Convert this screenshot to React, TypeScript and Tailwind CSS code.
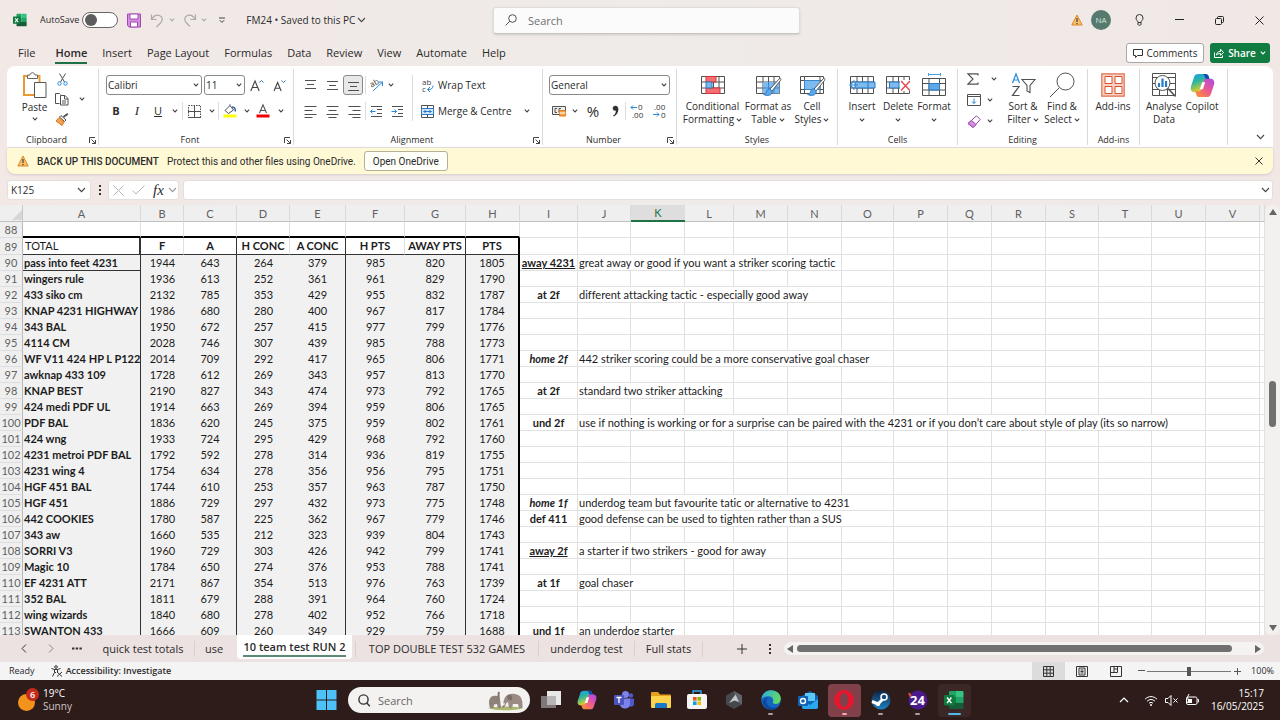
import { useState } from "react";
import type { ReactNode } from "react";

interface Row {
  name: string;
  v: number[];
  tag?: string;
  tagStyle?: string;
  note?: string;
  span?: number;
}

const rows: Row[] = [
  { name: "pass into feet 4231", v: [1944, 643, 264, 379, 985, 820, 1805], tag: "away 4231", tagStyle: "underline", note: "great away or good if you want a striker scoring tactic", span: 5 },
  { name: "wingers rule", v: [1936, 613, 252, 361, 961, 829, 1790] },
  { name: "433 siko cm", v: [2132, 785, 353, 429, 955, 832, 1787], tag: "at 2f", note: "different attacking tactic - especially good away", span: 5 },
  { name: "KNAP 4231 HIGHWAY", v: [1986, 680, 280, 400, 967, 817, 1784] },
  { name: "343 BAL", v: [1950, 672, 257, 415, 977, 799, 1776] },
  { name: "4114 CM", v: [2028, 746, 307, 439, 985, 788, 1773] },
  { name: "WF V11 424 HP L P122", v: [2014, 709, 292, 417, 965, 806, 1771], tag: "home 2f", tagStyle: "italic", note: "442 striker scoring could be a more conservative goal chaser", span: 6 },
  { name: "awknap 433 109", v: [1728, 612, 269, 343, 957, 813, 1770] },
  { name: "KNAP BEST", v: [2190, 827, 343, 474, 973, 792, 1765], tag: "at 2f", note: "standard two striker attacking", span: 3 },
  { name: "424 medi PDF UL", v: [1914, 663, 269, 394, 959, 806, 1765] },
  { name: "PDF BAL", v: [1836, 620, 245, 375, 959, 802, 1761], tag: "und 2f", note: "use if nothing is working or for a surprise can be paired with the 4231 or if you don’t care about style of play (its so narrow)", span: 12 },
  { name: "424 wng", v: [1933, 724, 295, 429, 968, 792, 1760] },
  { name: "4231 metroi PDF BAL", v: [1792, 592, 278, 314, 936, 819, 1755] },
  { name: "4231 wing 4", v: [1754, 634, 278, 356, 956, 795, 1751] },
  { name: "HGF 451 BAL", v: [1744, 610, 253, 357, 963, 787, 1750] },
  { name: "HGF 451", v: [1886, 729, 297, 432, 973, 775, 1748], tag: "home 1f", tagStyle: "italic", note: "underdog team but favourite tatic or alternative to 4231", span: 6 },
  { name: "442 COOKIES", v: [1780, 587, 225, 362, 967, 779, 1746], tag: "def 411", note: "good defense can be used to tighten rather than a SUS", span: 6 },
  { name: "343 aw", v: [1660, 535, 212, 323, 939, 804, 1743] },
  { name: "SORRI V3", v: [1960, 729, 303, 426, 942, 799, 1741], tag: "away 2f", tagStyle: "underline", note: "a starter if two strikers - good for away", span: 4 },
  { name: "Magic 10", v: [1784, 650, 274, 376, 953, 788, 1741] },
  { name: "EF 4231 ATT", v: [2171, 867, 354, 513, 976, 763, 1739], tag: "at 1f", note: "goal chaser", span: 2 },
  { name: "352 BAL", v: [1811, 679, 288, 391, 964, 760, 1724] },
  { name: "wing wizards", v: [1840, 680, 278, 402, 952, 766, 1718] },
  { name: "SWANTON 433", v: [1666, 609, 260, 349, 929, 759, 1688], tag: "und 1f", note: "an underdog starter", span: 2 },
];

const columns: [string, string][] = [
  ["A", "w-[118px]"], ["B", "w-[43px]"], ["C", "w-[53px]"], ["D", "w-[53px]"],
  ["E", "w-[56px]"], ["F", "w-[59px]"], ["G", "w-[61px]"], ["H", "w-[54px]"],
  ["I", "w-[58px]"], ["J", "w-[53px]"], ["K", "w-[54px]"], ["L", "w-[49px]"],
  ["M", "w-[54px]"], ["N", "w-[54px]"], ["O", "w-[52px]"], ["P", "w-[54px]"],
  ["Q", "w-[44px]"], ["R", "w-[54px]"], ["S", "w-[53px]"], ["T", "w-[53px]"],
  ["U", "w-[54px]"], ["V", "w-[54px]"], ["", ""],
];

const totals = ["F", "A", "H CONC", "A CONC", "H PTS", "AWAY PTS", "PTS"];
const grid = "border-r border-b border-[#e1e1e1]";

// right edge of each number column inside the bordered block
const edge = [
  "",
  "border-r border-r-[#333]",
  "",
  "border-r border-r-[#333]",
  "",
  "border-r border-r-[#333]",
  "border-r-2 border-r-black",
];

function Svg({ w, h, box, className, children }: { w: number; h: number; box?: string; className?: string; children: ReactNode }) {
  return (
    <svg
      width={w}
      height={h}
      viewBox={box ?? `0 0 ${w} ${h}`}
      fill="none"
      stroke="#505050"
      className={`shrink-0 overflow-visible ${className ?? ""}`}
      aria-hidden="true"
    >
      {children}
    </svg>
  );
}

function Chevron({ big, color = "#444" }: { big?: boolean; color?: string }) {
  return big ? (
    <Svg w={9} h={6}><path d="M1 1l3.500 3.600L8 1" stroke={color} strokeWidth="1.100" /></Svg>
  ) : (
    <Svg w={6} h={4}><path d="M.8.7L3 2.900 5.200.7" stroke={color} strokeWidth="1.100" /></Svg>
  );
}

function Btn({ label, w, className, children }: { label: string; w: string; className?: string; children: ReactNode }) {
  return (
    <button type="button" aria-label={label} className={`flex h-5 shrink-0 items-center justify-center ${w} ${className ?? ""}`}>
      {children}
    </button>
  );
}

function Sep() {
  return <span className="h-[18px] w-px shrink-0 bg-[#dcdcdc]" />;
}

function Group({ label, w, launcher, children }: { label: string; w: string; launcher?: boolean; children: ReactNode }) {
  return (
    <section className={`flex h-[76px] shrink-0 flex-col border-r border-[#dadada] ${w}`}>
      <div className="h-[66px]">{children}</div>
      <div className="flex h-2.5 items-center">
        <span className="flex-1 text-center text-[9px] leading-[10px]">{label}</span>
        {launcher && (
          <button type="button" aria-label={`${label} settings`} className="flex w-3 justify-center">
            <Svg w={7} h={7}><path d="M.5 6V.5H6M2.500 2.500l4 4M6.500 3v3.500H3" stroke="#444" /></Svg>
          </button>
        )}
      </div>
    </section>
  );
}

function BigButton({ w, icon, lines, chevron }: { w: string; icon: ReactNode; lines: string[]; chevron?: boolean }) {
  const last = lines.length - 1;
  return (
    <button type="button" className={`flex shrink-0 flex-col items-center pt-[3px] text-[10px] leading-[13px] whitespace-nowrap ${w}`}>
      <span className="mb-0.5 flex h-[26px] items-center">{icon}</span>
      {lines.map((l, i) => (
        <span key={i} className="flex h-[13px] items-center gap-0.5">
          {l}
          {chevron && i === last && <Chevron />}
        </span>
      ))}
    </button>
  );
}

function Combo({ label, value, w }: { label: string; value: string; w: string }) {
  return (
    <div className={`relative shrink-0 ${w}`}>
      <select aria-label={label} className="h-5 w-full appearance-none rounded-[3px] border border-[#8a8a8a] bg-white pl-px text-[10px] leading-[18px]">
        <option>{value}</option>
      </select>
      <span className="pointer-events-none absolute top-2 right-[3px]"><Chevron /></span>
    </div>
  );
}

function Lines({ d }: { d: string }) {
  return <Svg w={13} h={13}><path d={d} stroke="#505050" /></Svg>;
}

function Warning() {
  return (
    <Svg w={12} h={12}>
      <path d="M6 1l5.200 10H.8z" fill="#fbc06a" stroke="#d98a2b" strokeLinejoin="round" />
      <path d="M6 4v4M6 9v1.200" stroke="#333" strokeWidth="1.100" />
    </Svg>
  );
}

function ExcelLogo({ size }: { size: number }) {
  return (
    <Svg w={size} h={size} box="0 0 20 20">
      <g stroke="none">
        <path d="M5 2.200A1.200 1.200 0 016.200 1H12v6H5z" fill="#21a366" />
        <path d="M12 1h6.300a1.200 1.200 0 011.200 1.200V7H12z" fill="#33c481" />
        <path d="M5 7h7v6H5z" fill="#107c41" />
        <path d="M12 7h7.500v6H12z" fill="#21a366" />
        <path d="M5 13h14.500v4.800a1.200 1.200 0 01-1.200 1.200H6.200A1.200 1.200 0 015 17.800z" fill="#185c37" />
        <rect x="0" y="5" width="10.500" height="10.500" rx="1" fill="#0d7a40" />
      </g>
      <path d="M3 7.500l4.400 5.600M7.400 7.500L3 13.100" stroke="#fff" strokeWidth="1.500" />
    </Svg>
  );
}

function CopilotLogo({ size }: { size: number }) {
  return (
    <Svg w={size} h={size} box="0 0 26 26">
      <defs>
        <linearGradient id="cpA" x1="0" y1="0" x2="0.400" y2="1">
          <stop offset="0" stopColor="#1d9bf0" /><stop offset=".45" stopColor="#2bb5a0" /><stop offset="1" stopColor="#f4d01c" />
        </linearGradient>
        <linearGradient id="cpB" x1="1" y1="0" x2="0.200" y2="1">
          <stop offset="0" stopColor="#a44be8" /><stop offset=".5" stopColor="#e8559a" /><stop offset="1" stopColor="#fb8a3c" />
        </linearGradient>
      </defs>
      <g stroke="none">
        <path d="M9 1h7c2 0 3 1 3.600 3l.9 3h-3c-2 0-3 1-3.600 3l-2 7c-.6 2-1.500 3-3.500 3H5c-3 0-5-2-4-6L4 5c.8-3 2-4 5-4z" fill="url(#cpA)" />
        <path d="M13 1h3c2 0 3 1 3.600 3l.9 3h-4c-1.200-4-1.500-5-3.500-6z" fill="#1848b8" />
        <path d="M17 25h-7c-2 0-3-1-3.600-3l-.9-3h3c2 0 3-1 3.600-3l2-7c.6-2 1.500-3 3.500-3H21c3 0 5 2 4 6l-3 9c-.8 3-2 4-5 4z" fill="url(#cpB)" />
        <path d="M12.600 9.500h3.200l-2.400 7.500h-3.200z" fill="#fff" />
      </g>
    </Svg>
  );
}

function TitleBar({ saved, setSaved }: { saved: boolean; setSaved: (v: boolean) => void }) {
  return (
    <header className="flex h-10 shrink-0 items-center">
      <div className="flex flex-1 items-center pl-[13px]">
        <ExcelLogo size={14} />
        <label htmlFor="autosave" className="ml-[13px] text-[9px]">AutoSave</label>
        <input
          id="autosave"
          type="checkbox"
          checked={saved}
          onChange={(e) => setSaved(e.target.checked)}
          className="ml-[3px] h-4 w-9 appearance-none rounded-full border border-[#666] bg-white before:mt-px before:ml-0.5 before:block before:size-3 before:rounded-full before:bg-[#5d5d5d] before:content-[''] checked:before:ml-5"
        />
        <button type="button" aria-label="Save" className="ml-2">
          <Svg w={16} h={15}>
            <path d="M1.500 1h13v13H3L1.500 12.500z" fill="#d68ee0" stroke="#a348b3" />
            <path d="M4 1h8v5H4zM4.500 9h7v5h-7z" fill="#fff" stroke="#a348b3" />
          </Svg>
        </button>
        <button type="button" aria-label="Undo" className="ml-2 flex items-center gap-1">
          <Svg w={15} h={15}><path d="M1.500 1.500v5h5M1.800 6.200C4 2.500 7 1.500 9.500 2.500c3.500 1.500 3.500 5 1 7.500L6.500 14" stroke="#aaa" strokeWidth="1.200" /></Svg>
          <Chevron color="#aaa" />
        </button>
        <button type="button" aria-label="Redo" className="ml-2 flex items-center gap-1">
          <Svg w={14} h={15}><path d="M12.500 1.500v5h-5M12.200 6.200C10 2.500 7 1.500 4.500 2.500 1 4 1 7.500 3.500 10L7 13.500" stroke="#aaa" strokeWidth="1.200" /></Svg>
          <Chevron color="#aaa" />
        </button>
        <button type="button" aria-label="Customise toolbar" className="ml-3">
          <Svg w={6} h={7}><path d="M0 1h6M.8 3.200L3 5.400l2.200-2.200" stroke="#444" /></Svg>
        </button>
        <button type="button" className="ml-[21px] flex items-center gap-0.5 text-[10px] whitespace-nowrap">
          FM24 • Saved to this PC <Chevron big />
        </button>
      </div>
      <div className="relative w-[307px]">
        <input type="text" aria-label="Search" placeholder="Search" className="h-[27px] w-full rounded-[3px] border border-[#e0dcda] border-b-[#c8c4c2] bg-[#fbfbfb] pl-[34px] text-[11px] shadow-sm placeholder:text-[#707070]" />
        <span className="absolute top-[7px] left-3">
          <Svg w={12} h={12}><circle cx="7.500" cy="4.500" r="3.800" /><path d="M4.700 7.300L.6 11.400" /></Svg>
        </span>
      </div>
      <div className="flex flex-1 items-center justify-end">
        <span className="mr-2"><Warning /></span>
        <button type="button" className="mr-6 size-5 rounded-full bg-[#567a6d] text-center text-[8px] leading-5 text-[#d8e4df]">NA</button>
        <button type="button" aria-label="Tips" className="mr-[31px]">
          <Svg w={9} h={12}><path d="M3 8.500C3 6.500 1 6.500 1 4a3.500 3.500 0 017 0c0 2.500-2 2.500-2 4.500zM3 8.500v2c0 1 3 1 3 0v-2" stroke="#333" /></Svg>
        </button>
        <button type="button" aria-label="Minimise" className="mr-[31px]"><Svg w={9} h={2}><path d="M0 .5h9" stroke="#222" /></Svg></button>
        <button type="button" aria-label="Restore" className="mr-[31px]">
          <Svg w={9} h={9}><rect x=".5" y="2.500" width="6" height="6" rx="1" stroke="#222" /><path d="M2.500 2V1.500a1 1 0 011-1h4a1 1 0 011 1v4a1 1 0 01-1 1H7" stroke="#222" /></Svg>
        </button>
        <button type="button" aria-label="Close" className="mr-4"><Svg w={9} h={9}><path d="M.5.5l8 8M8.500.5l-8 8" stroke="#222" /></Svg></button>
      </div>
    </header>
  );
}

const menu = ["File", "Home", "Insert", "Page Layout", "Formulas", "Data", "Review", "View", "Automate", "Help"];

function MenuTabs() {
  return (
    <nav className="flex h-[26px] shrink-0 items-center pr-2.5 pl-[18px] text-[11px]">
      {menu.map((m) => (
        <a
          key={m}
          href="#"
          className={
            m === "Home"
              ? "mr-[15px] ml-5 border-b-2 border-[#1e7145] pt-0.5 font-semibold leading-[18px]"
              : "border-b-2 border-transparent pt-0.5 leading-[18px] not-first:mr-[15px] whitespace-nowrap"
          }
        >
          {m}
        </a>
      ))}
      <div className="ml-auto flex gap-1.5 text-[10px]">
        <button type="button" className="flex h-5 w-[78px] items-center justify-center gap-1 rounded-[3px] border border-[#a8a8a8] bg-white">
          <Svg w={10} h={9}><path d="M.5.5h9v6H4.500l-2 2v-2h-2z" stroke="#333" /></Svg>
          Comments
        </button>
        <button type="button" className="flex h-5 w-[60px] items-center justify-center gap-1 rounded-[3px] bg-[#107c41] font-semibold text-white">
          <Svg w={10} h={10}><path d="M.5 4.500v5h8v-2M2.500 7c.3-2.500 1.500-3.500 4-3.500V1.200L9.500 4.500 6.500 7.300V5.500C4.500 5.500 3.500 6 2.500 7z" stroke="#fff" /></Svg>
          Share
          <Chevron color="#fff" />
        </button>
      </div>
    </nav>
  );
}

function TableIcon({ children }: { children?: ReactNode }) {
  return (
    <Svg w={26} h={26}>
      <path d="M1.500 4.500h23v17h-23zM1.500 10h23M1.500 16h23M8 4.500v17M13.500 4.500v17M19 4.500v17" fill="#fff" />
      {children}
    </Svg>
  );
}

function Brush() {
  return (
    <>
      <path d="M24.500 6.500L15 17l2 2 8.500-10.500c1-1.500 0-2.800-1-2z" fill="#fff" stroke="#555" />
      <path d="M15 16.800c-2 0-3 1.200-3.500 3.200-.3 1.200-1.500 2-3 2.200 3 2 7.500 1.500 8.500-1.200.4-1.400 0-2.400-.6-3z" fill="#5ea8e8" stroke="#2b79c2" />
    </>
  );
}

function Ribbon() {
  return (
    <div className="mx-[7px] flex h-[81px] shrink-0 items-start overflow-hidden rounded-t-lg bg-white pt-[3px] text-[10px]">
      <Group label="Clipboard" w="w-[92px]" launcher>
        <div className="flex">
          <button type="button" className="ml-3.5 flex w-[27px] flex-col items-center pt-[3px] leading-[13px]">
            <Svg w={25} h={26}>
              <path d="M2 4h15.500v19H2z" stroke="#eb9a33" strokeWidth="2" fill="#fff" />
              <path d="M5.500 6.500V3H8c.5-3 4.500-3 5 0h2.500v3.500z" fill="#fff" stroke="#666" />
              <path d="M12.500 10.500h11.500v15H12.500z" fill="#fff" stroke="#555" />
            </Svg>
            <span className="mt-[3px] h-4">Paste</span>
            <Chevron />
          </button>
          <div className="ml-1 w-[34px]">
            <Btn label="Cut" w="w-5">
              <Svg w={11} h={13}><path d="M2.500.5l5 8.500M8.500.5L3.500 9" /><circle cx="2.500" cy="10.500" r="1.700" stroke="#2b88d8" /><circle cx="8.500" cy="10.500" r="1.700" stroke="#2b88d8" /></Svg>
            </Btn>
            <div className="flex items-center">
              <Btn label="Copy" w="w-5">
                <Svg w={14} h={14}><path d="M4.500 11.500h-4V1.500h4l1 1" /><path d="M5.500 3.500H10l3 3v6.500H5.500zM9.500 3.500V7H13M7 9h4M7 11h4" fill="#fff" /></Svg>
              </Btn>
              <button type="button" aria-label="Copy options" className="ml-[7px]"><Chevron /></button>
            </div>
            <Btn label="Format painter" w="w-5">
              <Svg w={14} h={13}><path d="M12.800.7L8.500 4" stroke="#555" strokeWidth="2" /><path d="M6 2.500l5 4.500-1.500 1.500-5-4.500z" fill="#fff" /><path d="M4 4.500l5 4.500-2 3.500L1 8z" fill="#f5a352" stroke="#d97a1e" /></Svg>
            </Btn>
          </div>
        </div>
      </Group>

      <Group label="Font" w="w-[195px]" launcher>
        <div className="flex flex-col gap-1.5 pt-1.5 pl-[7px]">
          <div className="flex">
            <Combo label="Font" value="Calibri" w="w-24" />
            <span className="w-0.5" />
            <Combo label="Font size" value="11" w="w-[41px]" />
            <Btn label="Increase font size" w="w-[24px]">
              <Svg w={14} h={13}><path d="M.8 12L5 2l4.200 10M2.200 8.500h5.600" stroke="#444" strokeWidth="1.100" /><path d="M9.500 3.500l2-2 2 2" stroke="#2b79c2" /></Svg>
            </Btn>
            <Btn label="Decrease font size" w="w-[20px]">
              <Svg w={13} h={13}><path d="M1 12L4.600 3.500 8.200 12M2.200 9.200h4.800" stroke="#444" strokeWidth="1.100" /><path d="M8.500 1.500l2 2 2-2" stroke="#2b79c2" /></Svg>
            </Btn>
          </div>
          <div className="flex items-center">
            <Btn label="Bold" w="w-5" className="text-[11px] font-bold">B</Btn>
            <Btn label="Italic" w="w-[22px]" className="font-['Liberation_Serif',serif] text-[13px] italic">I</Btn>
            <Btn label="Underline" w="w-5" className="text-[11px] underline">U</Btn>
            <Btn label="Underline options" w="w-[14px]"><Chevron /></Btn>
            <Sep />
            <Btn label="Borders" w="w-[22px]"><Svg w={13} h={13}><path d="M.5.5h12v12H.5z" strokeDasharray="1.500 1" /><path d="M6.500 0v13M0 6.500h13M0 12.500h13" /></Svg></Btn>
            <Btn label="Border options" w="w-[13px]"><Chevron /></Btn>
            <Sep />
            <Btn label="Fill colour" w="w-[22px]">
              <Svg w={14} h={14}><path d="M2 6.500l5-5 3.500 4.500-5 3.500z" /><path d="M7 1.500V.5M9 3c3 0 3.500 2 3.300 4.500" stroke="#2b579a" strokeWidth="1.400" /><path d="M.5 10.500h13v3H.5z" fill="#ff0" stroke="none" /></Svg>
            </Btn>
            <Btn label="Fill options" w="w-[11px]"><Chevron /></Btn>
            <Btn label="Font colour" w="w-[22px]">
              <Svg w={14} h={14}><path d="M3.500 9L7 .8 10.500 9M4.600 6.500h4.800" strokeWidth="1.100" /><path d="M.5 10.500h13v3H.5z" fill="#f00000" stroke="none" /></Svg>
            </Btn>
            <Btn label="Font colour options" w="w-[14px]"><Chevron /></Btn>
          </div>
        </div>
      </Group>

      <Group label="Alignment" w="w-[249px]" launcher>
        <div className="flex pt-1.5 pl-1.5">
          <div className="flex w-[112px] flex-col gap-1.5">
            <div className="flex items-center">
              <Btn label="Top align" w="w-[21px]"><Lines d="M1 1.500h11M3 5.500h7M1 9.500h11" /></Btn>
              <Btn label="Middle align" w="w-[22px]"><Lines d="M1 2.500h11M3 6.500h7M1 10.500h11" /></Btn>
              <Btn label="Bottom align" w="w-5" className="rounded-[3px] border border-[#8a8a8a] bg-[#e8e8e8]"><Lines d="M1 3.500h11M3 7.500h7M1 11.500h11" /></Btn>
              <span className="w-0.5" />
              <Sep />
              <Btn label="Orientation" w="w-[22px]">
                <Svg w={14} h={14}>
                  <text x="0" y="8" fontSize="8" fill="#444" stroke="none" transform="rotate(-30 4 6)">ab</text>
                  <path d="M3 13L12.500 4M8.500 4h4v4" stroke="#2b88d8" />
                </Svg>
              </Btn>
              <Chevron />
            </div>
            <div className="flex items-center">
              <Btn label="Align left" w="w-[21px]"><Lines d="M.5 1.500h12M.5 5.500h8M.5 9.500h12M.5 12.500h8" /></Btn>
              <Btn label="Centre" w="w-[22px]"><Lines d="M.5 1.500h12M2.500 5.500h8M.5 9.500h12M2.500 12.500h8" /></Btn>
              <Btn label="Align right" w="w-[22px]"><Lines d="M.5 1.500h12M4.500 5.500h8M.5 9.500h12M4.500 12.500h8" /></Btn>
              <Sep />
              <Btn label="Decrease indent" w="w-5"><Svg w={13} h={13}><path d="M1 1.500h11M7 4.500h5M7 8.500h5M1 11.500h11" /><path d="M5.500 6.500h-5M2.500 4.500l-2 2 2 2" stroke="#2b88d8" /></Svg></Btn>
              <Btn label="Increase indent" w="w-[22px]"><Svg w={13} h={13}><path d="M1 1.500h11M7 4.500h5M7 8.500h5M1 11.500h11" /><path d="M.5 6.500h5M3.500 4.500l2 2-2 2" stroke="#2b88d8" /></Svg></Btn>
            </div>
          </div>
          <div className="flex w-[122px] flex-col gap-1.5 border-l border-[#dcdcdc] pl-2">
            <button type="button" className="flex h-5 items-center gap-1 whitespace-nowrap">
              <Svg w={13} h={13}>
                <text x="1" y="6" fontSize="8" fill="#444" stroke="none">ab</text>
                <text x="1" y="13" fontSize="8" fill="#444" stroke="none">c</text>
                <path d="M12 6.500c0 3-1.500 4-5 4M9 8l-2.500 2.500L9 13" stroke="#2b88d8" />
              </Svg>
              Wrap Text
            </button>
            <div className="flex h-5 items-center justify-between pr-1">
              <button type="button" className="flex items-center gap-1 whitespace-nowrap">
                <Svg w={13} h={13}><path d="M.5.5h12v12H.5z" fill="#fff" /><path d="M.5 3.500h12v6H.5z" fill="#cfe5f8" stroke="#2b79c2" /><path d="M6.500.5v3M6.500 9.500v3" /><path d="M2.500 6.500h8M4.500 5L3 6.500 4.500 8M8.500 5L10 6.500 8.500 8" stroke="#2b79c2" /></Svg>
                Merge &amp; Centre
              </button>
              <Chevron />
            </div>
          </div>
        </div>
      </Group>

      <Group label="Number" w="w-[134px]" launcher>
        <div className="flex flex-col gap-1.5 pt-1.5 pl-1.5">
          <Combo label="Number format" value="General" w="w-[121px]" />
          <div className="flex items-center">
            <Btn label="Accounting" w="w-5">
              <Svg w={14} h={12}><path d="M.5 1.500h13v8H.5z" fill="#eee" /><path d="M5 3.500H3v4h2M9 3.500H7v4h2" /><path d="M7.500 5.500h6v5.500h-6z" fill="#f7a24d" stroke="#d9771c" /><path d="M7.500 8h6" stroke="#fff" /></Svg>
            </Btn>
            <Btn label="Accounting options" w="w-3"><Chevron /></Btn>
            <Btn label="Percent" w="w-6" className="text-[15px]">%</Btn>
            <Btn label="Comma style" w="w-5">
              <Svg w={7} h={12}><path d="M3.400.8C1.800.8.700 1.900.700 3.300s1 2.400 2.300 2.400c.4 0 .7 0 .9-.2C3.900 7.800 3 9.400 1 10.700l.7.8C4.800 9.800 6.400 7.300 6.400 4.200 6.400 2 5.200.8 3.400.8z" fill="#333" stroke="none" /></Svg>
            </Btn>
            <Sep />
            <Btn label="Increase decimal" w="w-[22px]">
              <Svg w={14} h={14}>
                <text x="8" y="6" fontSize="8" fill="#333" stroke="none">0</text>
                <text x="2" y="14" fontSize="8" fill="#333" stroke="none">.00</text>
                <path d="M7 3.500H1M3 1.500l-2 2 2 2" stroke="#2b88d8" />
              </Svg>
            </Btn>
            <Btn label="Decrease decimal" w="w-[22px]">
              <Svg w={14} h={14}>
                <text x="2" y="6" fontSize="8" fill="#333" stroke="none">.00</text>
                <text x="9" y="14" fontSize="8" fill="#333" stroke="none">0</text>
                <path d="M1 10.500h6M5 8.500l2 2-2 2" stroke="#2b88d8" />
              </Svg>
            </Btn>
          </div>
        </div>
      </Group>

      <Group label="Styles" w="w-[161px]">
        <div className="flex pl-1">
          <BigButton w="w-[63px]" lines={["Conditional", "Formatting"]} chevron icon={
            <TableIcon><path d="M6 4.500h10v5.500H6zM6 16h14v5.500H6z" fill="#f56e74" stroke="#d13438" /><path d="M6 10h6v6H6z" fill="#7ab8ec" stroke="#2b79c2" /></TableIcon>
          } />
          <BigButton w="w-[48px]" lines={["Format as", "Table"]} chevron icon={
            <TableIcon><path d="M8 10h16.500v11.500H8z" fill="#7dbaf0" stroke="none" /><path d="M8 16h16M13.500 10v11M19 10v11" stroke="#3a88cc" /><Brush /></TableIcon>
          } />
          <BigButton w="w-[40px]" lines={["Cell", "Styles"]} chevron icon={
            <Svg w={26} h={26}><path d="M1.500 4.500h23v17h-23zM1.500 8.500h23M5.500 4.500v17M21 4.500v17M1.500 17.500h23" fill="#fff" /><path d="M5.500 8.500H21v9H5.500z" fill="#7dbaf0" stroke="#3a88cc" /><Brush /></Svg>
          } />
        </div>
      </Group>

      <Group label="Cells" w="w-[120px]">
        <div className="flex pl-1.5">
          <BigButton w="w-[36px]" lines={["Insert", ""]} chevron icon={
            <TableIcon><path d="M6 10h20v6H6z" fill="#7dbaf0" stroke="#2b79c2" /><path d="M19 10v6M9 13H.8M5.500 8.500L1 13l4.500 4.500" stroke="#2b88d8" strokeWidth="1.200" /></TableIcon>
          } />
          <BigButton w="w-[36px]" lines={["Delete", ""]} chevron icon={
            <TableIcon><path d="M4.500 10H14v6H4.500z" fill="#7dbaf0" stroke="#2b79c2" /><path d="M15 8h11v11H15z" fill="#fff" stroke="none" /><path d="M16 9l9 9.500M25 9l-9 9.500" stroke="#e3444a" strokeWidth="1.300" /></TableIcon>
          } />
          <BigButton w="w-[36px]" lines={["Format", ""]} chevron icon={
            <Svg w={26} h={26}><path d="M1.500 6.500h23v17h-23zM1.500 11.500h23M1.500 18h23M8 6.500v17M18.500 6.500v17" fill="#fff" /><path d="M8 11.500h10.500V18H8z" fill="#5ea8e8" stroke="#2b79c2" /><path d="M7 2.500h13M7.500 1v3M19.500 1v3" stroke="#4aa0e0" /></Svg>
          } />
        </div>
      </Group>

      <Group label="Editing" w="w-[130px]">
        <div className="flex pl-[9px]">
          <div className="flex w-9 flex-col gap-px">
            <button type="button" aria-label="AutoSum" className="flex h-5 items-center gap-3"><Svg w={12} h={12}><path d="M11 2.500V.8H1l5 5.200-5 5.200h10V9.500" strokeWidth="1.200" /></Svg><Chevron /></button>
            <button type="button" aria-label="Fill" className="flex h-5 items-center gap-1.5"><Svg w={14} h={12}><path d="M.5.5h13v11H.5zM.5 2.500h13" fill="#fff" /><path d="M7 4.500v5M5 7.500l2 2 2-2" stroke="#2b88d8" /></Svg><Chevron /></button>
            <button type="button" aria-label="Clear" className="flex h-5 items-center gap-1.5"><Svg w={14} h={13}><path d="M9.500.8l3.700 3.700-7 8L1 8.500z" fill="#fff" stroke="#8a4b9c" /><path d="M4.500 5.500l4.500 4-2.800 3L1 8.500z" fill="#d68ee0" stroke="#a348b3" /></Svg><Chevron /></button>
          </div>
          <BigButton w="w-[40px]" lines={["Sort &", "Filter"]} chevron icon={
            <Svg w={25} h={26}><path d="M1.500 11L5 2l3.500 9M2.700 8h4.600" stroke="#2b88d8" strokeWidth="1.200" /><path d="M1.500 14.500H8L1.500 23.500H8.500" strokeWidth="1.200" /><path d="M11 7.500h13l-5 6v7l-3-1.500v-5.500z" fill="#fff" strokeWidth="1.100" /></Svg>
          } />
          <BigButton w="w-[38px]" lines={["Find &", "Select"]} chevron icon={
            <Svg w={26} h={26}><circle cx="16.500" cy="9.500" r="8.500" /><path d="M10.300 15.700L1 25" /></Svg>
          } />
        </div>
      </Group>

      <Group label="Add-ins" w="w-[52px]">
        <BigButton w="w-[50px]" lines={["Add-ins"]} icon={
          <Svg w={24} h={26}><path d="M.8 1.800h22.400v22.400H.8z" fill="#fbd3c4" stroke="#e07050" strokeWidth="1.200" /><path d="M4 4.500h7v7H4zM14 4.500h7v7h-7zM4 14.500h7v7H4zM14 14.500h7v7h-7z" fill="#fff" stroke="#d8502e" /></Svg>
        } />
      </Group>

      <Group label="" w="w-[88px]">
        <div className="flex pl-[5px]">
          <BigButton w="w-[38px]" lines={["Analyse", "Data"]} icon={
            <Svg w={26} h={26}>
              <path d="M1.500 1.500h23v22h-23zM1.500 5.500h23M1.500 11.500h23M1.500 17.500h23M8.500 17.500v6M16.500 17.500v6" fill="#fff" />
              <circle cx="11.500" cy="11" r="7.500" fill="#fff" /><path d="M17 16.500l7.500 8" strokeWidth="1.500" />
              <path d="M8 11v4M11.500 6.500V15M15 9v6" stroke="#2b79c2" strokeWidth="2.200" />
            </Svg>
          } />
          <BigButton w="w-[38px]" lines={["Copilot"]} icon={<CopilotLogo size={25} />} />
        </div>
      </Group>

      <button type="button" aria-label="Collapse ribbon" className="mt-[65px] mr-2 ml-auto"><Chevron big /></button>
    </div>
  );
}

function MessageBar() {
  return (
    <div className="mx-[7px] flex h-[27px] shrink-0 items-center rounded-b-lg border-t border-[#dcdcdc] bg-[#fff9d6] px-2.5 font-[Roboto,'Open_Sans',sans-serif] text-[10px] shadow">
      <Warning />
      <strong className="ml-2 font-medium">BACK UP THIS DOCUMENT</strong>
      <span className="ml-2">Protect this and other files using OneDrive.</span>
      <button type="button" className="ml-2 h-5 w-[84px] rounded-[3px] border border-[#b5b09a] bg-[#fffffa]">Open OneDrive</button>
      <button type="button" aria-label="Dismiss" className="ml-auto"><Svg w={8} h={8}><path d="M.5.5l7 7M7.500.5l-7 7" stroke="#333" /></Svg></button>
    </div>
  );
}

function FormulaBar() {
  return (
    <div className="mx-[7px] mt-1.5 mb-[5px] flex h-5 shrink-0">
      <div className="flex w-[84px] items-center rounded-[3px] border border-[#e4dedc] bg-white pr-1">
        <input aria-label="Name box" defaultValue="K125" className="w-full min-w-0 pl-[3px] text-[10px]" />
        <Chevron big />
      </div>
      <div className="flex w-[17px] items-center justify-center">
        <Svg w={2} h={10}><path d="M1 0v2M1 4v2M1 8v2" stroke="#333" strokeWidth="2" /></Svg>
      </div>
      <div className="flex w-[71px] items-center gap-2 rounded-[3px] border border-[#e4dedc] bg-white pl-1">
        <button type="button" aria-label="Cancel"><Svg w={11} h={11}><path d="M.5.5l10 10M10.500.5l-10 10" stroke="#b5b5b5" /></Svg></button>
        <button type="button" aria-label="Enter"><Svg w={13} h={10}><path d="M.5 5.500L4 9l8.500-8.500" stroke="#b5b5b5" /></Svg></button>
        <button type="button" aria-label="Insert function" className="flex items-center gap-1 font-['Liberation_Serif',serif] text-[15px] leading-none italic">fx <Chevron big color="#999" /></button>
      </div>
      <div className="ml-1 flex flex-1 items-center rounded-[3px] border border-[#e4dedc] bg-white pr-0.5">
        <input aria-label="Formula" className="h-full w-full text-[11px]" />
        <Chevron big />
      </div>
    </div>
  );
}

function RowHead({ n }: { n: number }) {
  return <th scope="row" className="overflow-hidden border-r border-b border-r-[#b8b8b8] border-b-[#dedede] bg-[#efefef] p-0 text-center font-normal text-[#5f5f5f]">{n}</th>;
}

function Empty({ count }: { count: number }) {
  return <>{Array.from({ length: count }, (_, i) => <td key={i} className={grid} />)}</>;
}

function Sheet() {
  return (
    <div className="flex min-h-0 flex-1">
      <div className="min-w-0 flex-1 overflow-hidden bg-white">
        <table className="w-full table-fixed border-separate border-spacing-0 font-[Lato,'Open_Sans',sans-serif] text-[11px] leading-[15px] whitespace-nowrap text-[#1c1c1c] [font-variant-ligatures:none] [&_td]:align-top">
          <thead>
            <tr className="h-[17px]">
              <th className="w-[23px] border-r border-b border-r-[#c8c8c8] border-b-[#c0c0c0] bg-[#efefef] p-0">
                <Svg w={10} h={10} className="mt-1 ml-auto"><path d="M10 0v10H0z" fill="#d6d6d6" stroke="none" /></Svg>
              </th>
              {columns.map(([c, w], i) => (
                <th
                  key={i}
                  scope="col"
                  className={`p-0 font-normal ${w} ${c === "K" ? "border-b-2 border-[#1e7145] bg-[#dedede] text-[#1e7145]" : "border-r border-b border-r-[#dadada] border-b-[#c0c0c0] bg-[#efefef] text-[#5f5f5f]"}`}
                >
                  {c}
                </th>
              ))}
            </tr>
          </thead>
          <tbody>
            <tr className="h-4">
              <RowHead n={88} />
              {columns.slice(0, 8).map(([c]) => (
                <td key={c} className="border-r border-b-2 border-r-[#e1e1e1] border-b-black" />
              ))}
              <Empty count={15} />
            </tr>
            <tr className="h-[17px]">
              <RowHead n={89} />
              <td className="border-r-2 border-b border-r-[#333] border-b-[#333] p-0 pl-0.5">TOTAL</td>
              {totals.map((t, i) => (
                <td key={i} className={`border-b border-b-[#333] p-0 text-center font-bold ${edge[i] || "border-r border-r-[#e1e1e1]"}`}>{t}</td>
              ))}
              <Empty count={15} />
            </tr>
            {rows.map((r, i) => (
              <tr key={r.name} className="h-4">
                <RowHead n={90 + i} />
                <td className={`border-r border-r-[#333] bg-[#f1f1f1] p-0 pl-px font-bold ${i === 0 ? "border-b border-b-[#333]" : ""}`}>{r.name}</td>
                {r.v.map((v, j) => (
                  <td key={j} className={`bg-[#f1f1f1] p-0 text-center ${edge[j]}`}>{v}</td>
                ))}
                <td className={`p-0 text-center font-bold ${grid} ${r.tagStyle ?? ""}`}>{r.tag}</td>
                {r.note && <td colSpan={r.span} className={`p-0 pl-px ${grid}`}>{r.note}</td>}
                <Empty count={14 - (r.note ? r.span ?? 1 : 0)} />
              </tr>
            ))}
          </tbody>
        </table>
      </div>
      <div className="flex w-[15px] flex-col items-center rounded-lg bg-[#f3f1f0] pt-1 pb-1">
        <Svg w={8} h={6}><path d="M4 0l4 6H0z" fill="#666" stroke="none" /></Svg>
        <span className="mt-[166px] h-[46px] w-[7px] rounded-full bg-[#707070]" />
        <Svg w={8} h={6} className="mt-auto"><path d="M4 6l4-6H0z" fill="#666" stroke="none" /></Svg>
      </div>
    </div>
  );
}

function SheetTabs() {
  const tab = "border-r border-[#d9cfce] leading-4 whitespace-nowrap";
  return (
    <div className="flex h-[27px] shrink-0 items-center bg-[#ebe2e1] text-[11px]">
      <button type="button" aria-label="Previous sheet" className="ml-[21px]"><Svg w={6} h={9}><path d="M5 .5l-4 4 4 4" stroke="#333" /></Svg></button>
      <button type="button" aria-label="Next sheet" className="ml-[21px]"><Svg w={6} h={9}><path d="M1 .5l4 4-4 4" stroke="#888" /></Svg></button>
      <button type="button" aria-label="All sheets" className="ml-[18px]"><Svg w={10} h={3}><path d="M0 1.500h2.400M3.700 1.500h2.400M7.400 1.500h2.400" stroke="#333" strokeWidth="2" /></Svg></button>
      <button type="button" className={`${tab} ml-2.5 w-[103px]`}>quick test totals</button>
      <button type="button" className="mr-1 w-[38px] leading-4">use</button>
      <button type="button" className="mb-[3px] flex h-6 w-[115px] items-center justify-center rounded-b bg-white font-semibold whitespace-nowrap">
        <span className="border-b-2 border-[#5a8a72] leading-[17px]">10 team test RUN 2</span>
      </button>
      <button type="button" className={`${tab} ml-[3px] w-[184px] border-l`}>TOP DOUBLE TEST 532 GAMES</button>
      <button type="button" className={`${tab} w-24`}>underdog test</button>
      <button type="button" className={`${tab} w-[68px]`}>Full stats</button>
      <button type="button" aria-label="New sheet" className="ml-[34px]"><Svg w={10} h={10}><path d="M5 0v10M0 5h10" stroke="#333" /></Svg></button>
      <span className="ml-[22px]"><Svg w={2} h={10}><path d="M1 0v2M1 4v2M1 8v2" stroke="#333" strokeWidth="2" /></Svg></span>
      <div className="mr-4 ml-[13px] flex h-[13px] flex-1 items-center rounded-full bg-[#f5f3f2] px-[3px]">
        <Svg w={6} h={8}><path d="M6 0v8L0 4z" fill="#666" stroke="none" /></Svg>
        <span className="mr-[23px] ml-1 h-[7px] flex-1 rounded-full bg-[#707070]" />
        <Svg w={6} h={8}><path d="M0 0v8l6-4z" fill="#666" stroke="none" /></Svg>
      </div>
    </div>
  );
}

function StatusBar({ zoom, setZoom }: { zoom: number; setZoom: (n: number) => void }) {
  return (
    <footer className="flex h-[18px] shrink-0 items-center bg-[#f4f4f4] text-[9px]">
      <span className="ml-[9px]">Ready</span>
      <button type="button" className="ml-4 flex items-center gap-[3px] font-semibold">
        <Svg w={12} h={12}><circle cx="5" cy="2" r="1.300" stroke="#333" /><path d="M.5 3.500l3 1v3l-2 4M9.500 3.500l-3 1v2.500M3.500 4.500h3M4 8l1-1M6 7l5 4.500M11 7l-5 4.500" stroke="#333" /></Svg>
        Accessibility: Investigate
      </button>
      <div className="ml-auto flex h-full items-center">
        <button type="button" aria-label="Normal view" className="flex h-full w-[33px] items-center justify-center bg-[#dcdcdc]">
          <Svg w={11} h={11}><path d="M.5.5h10v10H.5zM.5 3.800h10M.5 7.200h10M3.800.5v10M7.200.5v10" stroke="#333" /></Svg>
        </button>
        <button type="button" aria-label="Page layout" className="flex w-[34px] justify-center">
          <Svg w={12} h={11}><path d="M.5.5h11v10H.5zM3 2h6v7H3zM4.500 4h3M4.500 5.500h3M4.500 7h3" stroke="#333" /></Svg>
        </button>
        <button type="button" aria-label="Page break preview" className="flex w-[33px] justify-center">
          <Svg w={12} h={11}><path d="M.5.5h11v10H.5zM4 .5v6M.5 6.500h7v-6M4 3h3.500" stroke="#333" /></Svg>
        </button>
        <button type="button" aria-label="Zoom out" className="ml-1 flex w-[11px] justify-center"><Svg w={7} h={2}><path d="M0 .5h7" stroke="#555" /></Svg></button>
        <input
          type="range"
          aria-label="Zoom"
          min={0}
          max={200}
          value={zoom}
          onChange={(e) => setZoom(Number(e.target.value))}
          className="w-[84px] appearance-none bg-transparent [&::-webkit-slider-runnable-track]:h-px [&::-webkit-slider-runnable-track]:bg-[#777] [&::-webkit-slider-thumb]:-mt-1 [&::-webkit-slider-thumb]:h-[9px] [&::-webkit-slider-thumb]:w-1 [&::-webkit-slider-thumb]:appearance-none [&::-webkit-slider-thumb]:bg-[#555]"
        />
        <button type="button" aria-label="Zoom in" className="ml-0.5 flex w-[9px] justify-center"><Svg w={7} h={7}><path d="M0 3.500h7M3.500 0v7" stroke="#555" /></Svg></button>
        <span className="mr-1.5 w-[32px] text-right text-[9px]">{zoom}%</span>
      </div>
    </footer>
  );
}

const apps: { name: string; tile?: string; dot?: string; icon: ReactNode }[] = [
  { name: "Task view", icon: <Svg w={20} h={20}><path d="M6 1h14v14H6z" fill="#e8e8e8" stroke="none" /><path d="M0 6h15v12H0z" fill="#8c8a8a" fillOpacity=".85" stroke="none" /><path d="M6 6h9v9H6z" fill="#b8b6b6" stroke="none" /></Svg> },
  { name: "Copilot", icon: <CopilotLogo size={20} /> },
  {
    name: "Teams",
    icon: (
      <Svg w={20} h={20}>
        <g stroke="none">
          <circle cx="11.500" cy="4.500" r="3.500" fill="#7b83eb" /><circle cx="17" cy="5.500" r="2.200" fill="#5059c9" />
          <path d="M14 8.500h6V14c0 2.500-3 3.500-6 2z" fill="#5059c9" /><path d="M6 8.500h10V14c0 6-10 6-10 0z" fill="#7b83eb" />
          <rect y="5" width="10" height="10" rx="1" fill="#4b53bc" />
        </g>
        <path d="M2.500 7.500h5M5 7.500V13" stroke="#fff" strokeWidth="1.300" />
      </Svg>
    ),
  },
  { name: "File Explorer", icon: <Svg w={20} h={20}><g stroke="none"><path d="M0 3a1 1 0 011-1h6l2 2.500h10a1 1 0 011 1V17H0z" fill="#e5a218" /><path d="M0 6h20v11a1 1 0 01-1 1H1a1 1 0 01-1-1z" fill="#fdd24d" /><path d="M4 14.500a1.500 1.500 0 011.500-1.500h9a1.500 1.500 0 011.500 1.500V18H4z" fill="#1879c9" /></g></Svg> },
  {
    name: "Microsoft Store",
    icon: (
      <Svg w={20} h={20}>
        <path d="M6 5V1h8v4" stroke="#35a6e8" strokeWidth="1.400" />
        <g stroke="none"><rect y="4" width="20" height="15" rx="2" fill="#f5f5f5" /><path d="M6 7h3.600v3.600H6z" fill="#f25022" /><path d="M10.400 7H14v3.600h-3.600z" fill="#7fba00" /><path d="M6 11.400h3.600V15H6z" fill="#00a4ef" /><path d="M10.400 11.400H14V15h-3.600z" fill="#ffb900" /></g>
      </Svg>
    ),
  },
  { name: "Launcher", icon: <Svg w={18} h={20}><path d="M9 1l8 4.500v9L9 19l-8-4.500v-9z" fill="#45484c" stroke="none" /><path d="M9 1l8 4.500v9L11 11z" fill="#606469" stroke="none" /><path d="M10.500 4.500l3.500 7.500-4.500-1.500L4 13z" fill="#c5c9cc" stroke="none" /></Svg> },
  {
    name: "Edge",
    dot: "w-[5px] bg-[#a5a09f]",
    icon: (
      <Svg w={20} h={20}>
        <defs><linearGradient id="edge" x1="0" y1="0" x2="1" y2=".3"><stop offset="0" stopColor="#2aa8e8" /><stop offset="1" stopColor="#5fd867" /></linearGradient></defs>
        <g stroke="none"><circle cx="10" cy="10" r="9.800" fill="#1565c0" /><path d="M.2 9C1.500 3 5.500.2 10 .2c6 0 10 4.300 9.800 8.800-.2 3-2.300 5-5.300 5-2 0-3-.8-2.600-1.800C13 10.500 12 6.500 8 6.200 4.500 6 1.500 7.500.2 9z" fill="url(#edge)" /><path d="M7 7.500C4 10 5 16 11 17.500c3 .7 5.500-.3 7.500-2C15 21.500 5 21 2 14 1 10.500 4 7.500 7 7.500z" fill="#0d47a1" /></g>
      </Svg>
    ),
  },
  {
    name: "Outlook",
    icon: (
      <Svg w={20} h={20}>
        <g stroke="none"><path d="M4 6l8-5 8 5v11a2 2 0 01-2 2H6a2 2 0 01-2-2z" fill="#1066b5" /><path d="M7 3h10v8H7z" fill="#5cc8f5" /><path d="M4 11l8 4 8-6v8a2 2 0 01-2 2H6a2 2 0 01-2-2z" fill="#28a8ea" /><rect y="6" width="10" height="10" rx="1" fill="#0f63b8" /></g>
        <circle cx="5" cy="11" r="2.500" stroke="#fff" strokeWidth="1.400" />
      </Svg>
    ),
  },
  { name: "Opera", tile: "bg-[#81414a]", dot: "w-[5px] bg-[#f0a8ae]", icon: <Svg w={20} h={20}><circle cx="10" cy="10" r="10" fill="#e8152e" stroke="none" /><ellipse cx="10" cy="10" rx="4.300" ry="7" fill="#81414a" stroke="none" /></Svg> },
  {
    name: "Steam",
    dot: "w-[5px] bg-[#a5a09f]",
    icon: (
      <Svg w={20} h={20}>
        <defs><linearGradient id="steam" x1="0" y1="0" x2="0" y2="1"><stop offset="0" stopColor="#10233f" /><stop offset="1" stopColor="#1a83c4" /></linearGradient></defs>
        <circle cx="10" cy="10" r="9.500" fill="url(#steam)" stroke="none" />
        <path d="M1 11.500l6 2.500 6-6" stroke="#fff" strokeWidth="3" /><circle cx="13" cy="7" r="3" fill="#1c4a78" stroke="#fff" strokeWidth="1.500" /><circle cx="7" cy="14" r="2.200" fill="#fff" stroke="none" />
      </Svg>
    ),
  },
  {
    name: "Football Manager 24",
    dot: "w-[5px] bg-[#a5a09f]",
    icon: (
      <Svg w={20} h={20}>
        <circle cx="10" cy="10" r="9.500" fill="#4a1a8c" stroke="none" />
        <path d="M1 3l2 4" stroke="#e5502e" strokeWidth="2" />
        <text x="2" y="15" fontSize="13" fontWeight="700" fill="#fff" stroke="none">24</text>
      </Svg>
    ),
  },
  { name: "Excel", tile: "bg-[#3b2826]", dot: "w-[13px] bg-[#55b4e8]", icon: <ExcelLogo size={20} /> },
];

function Taskbar() {
  return (
    <div className="flex h-10 shrink-0 items-center bg-[#2e1c1a] text-[10px] text-white">
      <button type="button" className="ml-[17px] flex w-[298px] items-center gap-1 text-left">
        <Svg w={22} h={24}>
          <circle cx="9.500" cy="14.500" r="8.500" fill="#f3931c" stroke="none" />
          <circle cx="15.500" cy="6.500" r="6.500" fill="#c42b1c" stroke="none" />
          <text x="13" y="10" fontSize="9" fontWeight="600" fill="#fff" stroke="none">6</text>
        </Svg>
        <span className="leading-[13px]">19°C<br /><span className="text-[#cfc7c5]">Sunny</span></span>
      </button>
      <button type="button" aria-label="Start">
        <Svg w={22} h={20}><path d="M1.500 0H11v9.500H1.500zM12 0h9.500v9.500H12zM1.500 10.500H11V20H1.500zM12 10.500h9.500V20H12z" fill="#4cc2f8" stroke="none" /></Svg>
      </button>
      <div className="relative ml-[11px] h-[26px] w-[182px] shrink-0">
        <input type="text" aria-label="Search Windows" placeholder="Search" className="h-full w-full rounded-full bg-[#f4f2f1] pl-[30px] text-[11px] text-black placeholder:text-[#666]" />
        <span className="absolute top-[7px] left-2.5"><Svg w={12} h={13}><circle cx="5.500" cy="5.500" r="4.600" stroke="#333" strokeWidth="1.400" /><path d="M8.800 9l3 3.200" stroke="#333" strokeWidth="1.400" /></Svg></span>
        <span className="absolute top-0.5 right-1.5">
          <Svg w={37} h={22}>
            <g stroke="none">
              <path d="M1 19c8-2 28-2 35 0-6 3-29 3-35 0z" fill="#a9b86a" />
              <path d="M3 19c-2-6-1-11 3-12 4-.8 6 0 7 3l1 9h-3l-1-4-3 .5L6.500 19z" fill="#8f827b" />
              <path d="M10 9c1-3 0-5 1.500-6.500l1.500.8C12 5 13.500 8 12 11z" fill="#857770" />
              <path d="M17 11c1-5 6-7 11-6 6 1 8 5 7.500 14H32l-1-4h-5l-1 4h-3l-1-6c-2 0-2 4-4.500 6-1 0-2-1-1-2 1.500-1 .5-4 1.500-6z" fill="#9a8c84" />
              <path d="M21 6c3-1 5 1 4 5-2 1-4 0-5-2z" fill="#7c6e68" />
              <path d="M17.500 14c-1.500 1-3 1-4 .5 1 1.500 3 2 4.500.8z" fill="#fff" />
            </g>
          </Svg>
        </span>
      </div>
      <div className="ml-1 flex w-[437px] shrink-0 items-center justify-between">
        {apps.map((a) => (
          <button type="button" key={a.name} aria-label={a.name} className={`relative flex h-[33px] w-[33px] items-center justify-center rounded ${a.tile ?? ""}`}>
            {a.icon}
            {a.dot && <span className={`absolute bottom-0.5 h-0.5 rounded-full ${a.dot}`} />}
          </button>
        ))}
      </div>
      <div className="mr-4 ml-auto flex items-center">
        <button type="button" aria-label="Hidden icons" className="mr-[15px]"><Svg w={10} h={6}><path d="M1 5l4-4 4 4" stroke="#fff" strokeWidth="1.200" /></Svg></button>
        <button type="button" aria-label="Network" className="mr-[7px]"><Svg w={14} h={11}><path d="M1 4.200c3.500-3.500 8.500-3.500 12 0M3 6.300c2.500-2.400 5.500-2.400 8 0M5 8.300c1.300-1.200 2.700-1.200 4 0" stroke="#fff" /><circle cx="7" cy="10" r="1" fill="#fff" stroke="none" /></Svg></button>
        <button type="button" aria-label="Volume" className="mr-[7px]"><Svg w={13} h={11}><path d="M.5 3.500h2.500l3-3v10l-3-3H.5zM8.500 3.500l4 4M12.500 3.500l-4 4" stroke="#fff" /></Svg></button>
        <button type="button" aria-label="Battery" className="mr-3"><Svg w={14} h={12}><rect x="1.500" y="3" width="10.500" height="7.500" rx="1.500" stroke="#fff" /><path d="M12.500 5.500h1v2.500h-1" stroke="#fff" /><path d="M3 5h4v4H3z" fill="#fff" stroke="none" /><path d="M4 0L1.500 5H4L2.500 9" stroke="#fff" /></Svg></button>
        <span className="text-right leading-[13px]">15:17<br />16/05/2025</span>
      </div>
    </div>
  );
}

export default function App() {
  const [saved, setSaved] = useState(false);
  const [zoom, setZoom] = useState(100);

  return (
    <div className="flex h-screen flex-col overflow-hidden bg-linear-to-r from-[#f2e8e6] via-[#efebe8] to-[#f1e8e6] font-['Open_Sans','Noto_Sans',sans-serif] text-[#2b2b2b]">
      <TitleBar saved={saved} setSaved={setSaved} />
      <MenuTabs />
      <Ribbon />
      <MessageBar />
      <FormulaBar />
      <Sheet />
      <SheetTabs />
      <StatusBar zoom={zoom} setZoom={setZoom} />
      <Taskbar />
    </div>
  );
}
